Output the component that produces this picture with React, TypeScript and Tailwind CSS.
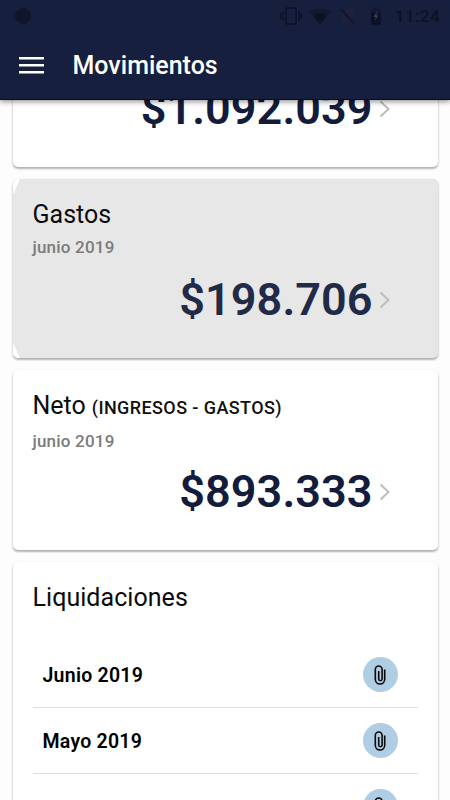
import React from 'react';

interface SummaryCardProps {
  title?: string;
  detail?: string;
  period?: string;
  amount: string;
  pressed?: boolean;
}

const settlements = ['Junio 2019', 'Mayo 2019', ''];

const cardShadow =
  'shadow-[0_2px_2px_rgba(0,0,0,0.22),0_1px_3px_rgba(0,0,0,0.16)]';

function StatusBar() {
  return (
    <div className="flex h-8 items-center justify-between pl-[15px] pr-[10px]">
      <div className="h-4 w-4 rounded-full bg-[#10152c]" />
      <div className="flex items-center text-[#0c1124]">
        <svg width="24" height="20" viewBox="0 0 24 20" fill="none" stroke="currentColor" strokeWidth="1.4">
          <rect x="7" y="2" width="10" height="16" rx="1" />
          <path d="M4 5v10M1.7 7v6M20 5v10M22.3 7v6" />
        </svg>
        <svg className="ml-[6px]" width="22" height="18" viewBox="0 0 22 18" fill="currentColor">
          <path d="M1 5.2C7 .8 15 .8 21 5.2L11 17z" opacity=".45" />
          <path d="M4 8.6c4-3 10-3 14 0L11 17z" />
        </svg>
        <svg className="ml-[8px]" width="18" height="18" viewBox="0 0 18 18">
          <path d="M7 1.500h7.500V16H4V4.500z" fill="#20203a" />
          <path d="M2 2l13 14" stroke="#161f3d" strokeWidth="3" />
          <path d="M2 2.500l12.500 13.500" stroke="#11142b" strokeWidth="1.4" />
        </svg>
        <svg className="ml-[13px]" width="12" height="18" viewBox="0 0 12 18">
          <path d="M4 0h4v2h3v4H1V2h3z" fill="#131731" />
          <path d="M1 6h10v11.500H1z" fill="currentColor" />
          <path d="M7 4L3.500 10h2L5 14l3.500-5.500h-2z" fill="#343a52" />
        </svg>
        <span className="ml-[13px] text-[17px] font-medium leading-none tracking-[0.4px]">11:24</span>
      </div>
    </div>
  );
}

function Header() {
  return (
    <header className="relative z-10 h-[100px] shrink-0 border-b border-[#080c20] bg-[#161f3d] shadow-[0_2px_5px_rgba(0,0,0,0.4)]">
      <StatusBar />
      <div className="flex h-[67px] items-center pl-[19px]">
        <svg width="25" height="17" viewBox="0 0 25 17" fill="#ffffff">
          <path d="M0 0h25v2.600H0zM0 7h25v2.600H0zM0 14h25v2.600H0z" />
        </svg>
        <h1 className="ml-[28.5px] text-[25px] font-medium leading-none text-white">Movimientos</h1>
      </div>
    </header>
  );
}

function SummaryCard({ title, detail, period, amount, pressed = false }: SummaryCardProps) {
  return (
    <section
      className={`relative flex h-[179.5px] shrink-0 flex-col overflow-hidden rounded-[5px] px-5 pb-[31px] pt-[21px] ${cardShadow} ${
        pressed ? 'bg-[#e7e7e7]' : 'bg-white'
      }`}
    >
      {/* touch ripple has not reached the left corners yet */}
      {pressed && (
        <svg className="absolute left-0 top-0 h-full w-2" viewBox="0 0 8 180" fill="#ffffff">
          <path d="M0 0h7L1 14H0zM0 166h1l6 14H0z" />
        </svg>
      )}
      {title && (
        <h2 className="text-[25px] leading-[30px] text-[#0c0c0c]">
          {title}
          {detail && (
            <span className="ml-[6px] text-[18px] font-medium tracking-[0.4px] text-[#111111]">{detail}</span>
          )}
        </h2>
      )}
      {period && (
        <p className="mt-[6.5px] text-[17px] font-medium leading-[22px] tracking-[0.2px] text-[#7b7b7b]">{period}</p>
      )}
      <div className="mt-auto flex items-center justify-end pr-[27px]">
        <span
          className={`text-[45px] font-[650] leading-[54px] tracking-[0.05px] ${pressed ? 'text-[#212a47]' : 'text-[#141c3b]'}`}
        >
          {amount}
        </span>
        <svg className="ml-[6px]" width="12" height="18" viewBox="0 0 12 18" fill="none" stroke="#bdbdbd" strokeWidth="2">
          <path d="M1.500 1.500L9.500 9L1.500 16.500" />
        </svg>
      </div>
    </section>
  );
}

function AttachButton() {
  return (
    <button className="flex h-[35px] w-[35px] items-center justify-center rounded-full bg-[#afcee4]">
      <svg width="12" height="20" viewBox="0 0 12 20" fill="none" stroke="#080808" strokeWidth="1.6">
        <path d="M10.700 4.500V14.300a4.700 4.700 0 0 1-9.400 0V4.400a3.400 3.400 0 0 1 6.800 0V14a1.700 1.700 0 0 1-3.400 0V6" />
      </svg>
    </button>
  );
}

function SettlementsCard() {
  return (
    <section className={`shrink-0 rounded-[5px] bg-white px-5 pt-[21px] ${cardShadow}`}>
      <h2 className="text-[25px] leading-[30px] tracking-[0.05px] text-[#0c0c0c]">Liquidaciones</h2>
      <ul className="mt-[29.5px]">
        {settlements.map((month, i) => (
          <li
            key={i}
            className="flex h-[66.2px] items-center justify-between border-b border-[#dedede] pl-[10px] pr-[20px]"
          >
            <span className="pt-[2px] text-[19.5px] font-semibold leading-none tracking-[0.25px] text-black">{month}</span>
            <AttachButton />
          </li>
        ))}
      </ul>
    </section>
  );
}

export default function App() {
  return (
    <div className="flex h-[800px] w-[450px] flex-col overflow-hidden bg-[#fdfdfd] font-['Roboto',sans-serif]">
      <Header />
      <main className="min-h-0 flex-1 overflow-hidden px-[12.5px]">
        {/* list scrolled so the income card sits partly under the header */}
        <div className="-mt-[113px] flex flex-col gap-3">
          <SummaryCard amount="$1.092.039" />
          <SummaryCard title="Gastos" period="junio 2019" amount="$198.706" pressed />
          <SummaryCard title="Neto" detail="(INGRESOS - GASTOS)" period="junio 2019" amount="$893.333" />
          <SettlementsCard />
        </div>
      </main>
    </div>
  );
}
